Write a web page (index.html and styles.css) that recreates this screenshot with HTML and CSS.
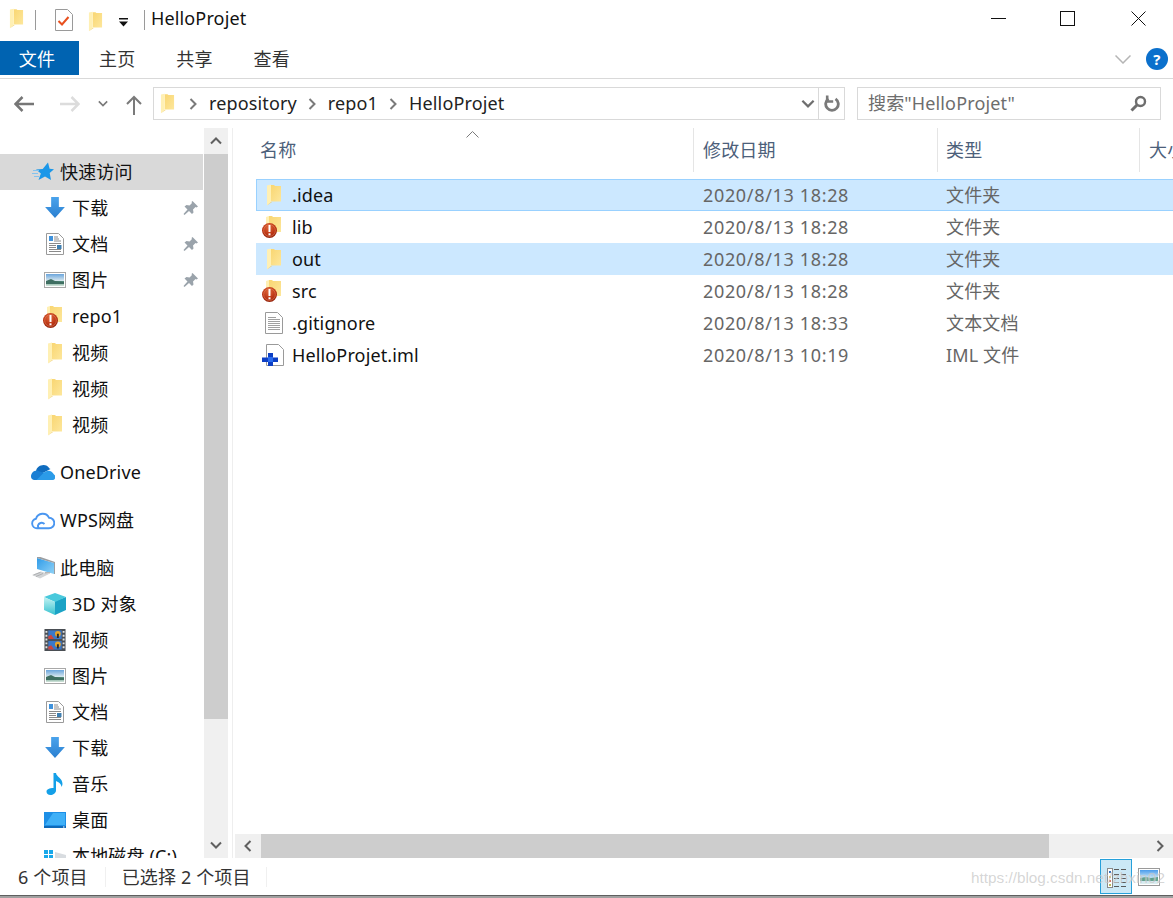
FILE: index.html
```html
<!DOCTYPE html>
<html lang="zh">
<head>
<meta charset="utf-8">
<title>HelloProjet</title>
<link rel="stylesheet" href="styles.css">
</head>
<body>
<svg class="sprite" aria-hidden="true">
  <defs>
    <linearGradient id="gFolder" x1="0" y1="0" x2="1" y2="1"><stop offset="0" stop-color="#f9d672"/><stop offset="1" stop-color="#fde79c"/></linearGradient>
    <linearGradient id="gBlue" x1="0" y1="0" x2="0" y2="1"><stop offset="0" stop-color="#4aa3ec"/><stop offset="1" stop-color="#2a7fd0"/></linearGradient>
    <radialGradient id="gRed" cx=".45" cy=".3" r=".75"><stop offset="0" stop-color="#e0683a"/><stop offset=".6" stop-color="#bb3414"/><stop offset="1" stop-color="#8c220e"/></radialGradient>
    <linearGradient id="gPic" x1="0" y1="0" x2="0" y2="1"><stop offset="0" stop-color="#6aa5dc"/><stop offset=".55" stop-color="#d6e6ee"/><stop offset=".6" stop-color="#4f8a78"/><stop offset="1" stop-color="#d4e6dc"/></linearGradient>
    <linearGradient id="gCube" x1="0" y1="0" x2="0" y2="1"><stop offset="0" stop-color="#c4f3f3"/><stop offset="1" stop-color="#36c2d0"/></linearGradient>
    <linearGradient id="gMon" x1="0" y1="0" x2="1" y2="1"><stop offset="0" stop-color="#2f9be8"/><stop offset="1" stop-color="#8fd2f7"/></linearGradient>
    <linearGradient id="gSky" x1="0" y1="0" x2="0" y2="1"><stop offset="0" stop-color="#4a9cec"/><stop offset=".5" stop-color="#b8dcf4"/><stop offset="1" stop-color="#e0f0f0"/></linearGradient>
    <symbol id="i-folder" viewBox="0 0 16 22">
      <path d="M5 1h3l1 1h6v15.500H5z" fill="url(#gFolder)"/>
      <path d="M1 1.500L5 .500V18l-4 3.500z" fill="#fff0b4"/>
      <path d="M1 21.500L5 18h1z" fill="#eecb68"/>
    </symbol>
    <symbol id="i-badfolder" viewBox="0 0 22 22">
      <path d="M7 0h3l1 1h8v15H7z" fill="url(#gFolder)"/>
      <path d="M4 1l3-1v12H4z" fill="#fff0b4"/>
      <circle cx="7.500" cy="14.500" r="7.500" fill="url(#gRed)"/>
      <circle cx="7.500" cy="14.500" r="5.800" fill="none" stroke="#f09a70" stroke-opacity=".45"/>
      <rect x="6.500" y="9" width="2" height="7" fill="#fff"/><rect x="6.500" y="17.300" width="2" height="2" fill="#fff"/>
    </symbol>
    <symbol id="i-down" viewBox="0 0 20 20">
      <path d="M6.500 0h7v9H19l-9 10-9-10h5.500z" fill="url(#gBlue)"/>
    </symbol>
    <symbol id="i-doc" viewBox="0 0 18 22">
      <path d="M.5.500h12l5 5v16H.500z" fill="#fff" stroke="#9a9a9a"/>
      <path d="M3 3h4v5H3z" fill="#3f92dc"/>
      <path d="M8 4h4M8 6h5M8 8h7M3 10.500h12M3 12.500h7M3 14.500h7M3 16.500h12M3 18.500h12" stroke="#8a8a8a"/>
      <path d="M11 12h4.500v4H11z" fill="#3f7fb0"/>
    </symbol>
    <symbol id="i-pic" viewBox="0 0 22 16">
      <rect x=".5" y=".5" width="21" height="15" fill="#fff" stroke="#a8a8a8"/>
      <rect x="2" y="2" width="18" height="12" fill="url(#gPic)"/>
      <path d="M2 9l5-2 4 2 9 1v2L2 12z" fill="#3f6f62"/>
    </symbol>
    <symbol id="i-pin" viewBox="0 0 16 16">
      <path d="M9.500 1l5.500 5.500-1.500 1-1-.5-2.500 2.500.5 3-1.500 1.500-3-3-4.500 4-1-1 4-4.500-3-3L3.500 5l3 .500L9 3l-.5-1z" fill="#9aa3ab"/>
    </symbol>
    <symbol id="i-star" viewBox="0 0 22 20">
      <path d="M16 .5l1.600 6.300 4.400.4-4.300 3.700 1.300 7.100-6-3.600-6.500 3.600 2.400-6.600-4.900-3.900 6.700-.4z" fill="#1b97e8"/>
      <path d="M1 8.500h6M0 11.500h6M2 14.500h5" stroke="#85c3ee"/>
    </symbol>
    <symbol id="i-onedrive" viewBox="0 0 24 17">
      <path d="M5 7A7.500 7.500 0 0 1 18.500 5a5 5 0 0 1 1 .4L9 11z" fill="#0f6cbf"/>
      <path d="M8 16.500h13a3 3 0 0 0 2-5.500C21 7 17 6 14 8.500L4.500 11A3 3 0 0 0 5 16.500z" fill="#2b9be8"/>
      <path d="M0 13c0-3.500 3-6.500 6.500-6l6 2.500-7 7H3A3.500 3.500 0 0 1 0 13z" fill="#1a7fd4"/>
    </symbol>
    <symbol id="i-cloud" viewBox="0 0 24 19">
      <path d="M6 17.800a4.800 4.800 0 0 1-1-9.500A7 7 0 0 1 18 7.200a5.300 5.300 0 0 1 0 10.600H6zM8 17.800c-2-2-1-4.500 1.500-5.300 1.500-.5 3 0 4 1" fill="none" stroke="#4a96f0" stroke-width="1.900"/>
    </symbol>
    <symbol id="i-pc" viewBox="0 0 24 22">
      <path d="M6 1l17 5v11L6 12z" fill="url(#gMon)"/>
      <path d="M6 0l2-.5 16 5.500v12l-1 0V6L6 1z" fill="#9a9ea2"/>
      <path d="M1 18l9-3.500 8 2.500-9 4.500z" fill="#d2d4d6"/><path d="M2.500 18l7-2.700M5 19.500l7-3" stroke="#aeb0b2"/><path d="M14 15h5v1.500h-5z" fill="#b5b5b5"/>
    </symbol>
    <symbol id="i-3d" viewBox="0 0 22 22">
      <path d="M11 8l11-4v13l-11 5z" fill="#1ba3c6"/>
      <path d="M11 0L0 4l11 5 11-5z" fill="#49c9dc"/>
      <path d="M0 4l11 5v13L0 17z" fill="url(#gCube)"/>
    </symbol>
    <symbol id="i-film" viewBox="0 0 22 23">
      <rect width="22" height="23" fill="#4a4e54"/>
      <rect x="4" y="1.500" width="14" height="9" fill="#3b78c8"/>
      <rect x="4" y="12.500" width="14" height="9" fill="#3b78c8"/>
      <circle cx="14" cy="5" r="3" fill="#e8a52a"/><circle cx="14" cy="16" r="3" fill="#e8a52a"/>
      <path d="M13 5h2v4.500h-2zM13 16h2v4.500h-2z" fill="#2a2a2a"/>
      <path d="M4 10.500l0-3 3-1.500 3 4.500zM4 21.500l0-3 3-1.500 3 4.500z" fill="#d0433a"/>
      <path d="M1 2h2v2H1zM1 6h2v2H1zM1 10h2v2H1zM1 14h2v2H1zM1 18h2v2H1zM19 2h2v2h-2zM19 6h2v2h-2zM19 10h2v2h-2zM19 14h2v2h-2zM19 18h2v2h-2z" fill="#e2e2e2"/>
    </symbol>
    <symbol id="i-music" viewBox="0 0 17 22">
      <path d="M7 0h2.500c.5 4 6.500 5 6.500 11 0 1-.5 2-1 3 0-3-3-5-5.500-6V17.500c0 2.500-3 4.500-5.500 4.500S0 20.500 0 18.500 3 15 7 15z" fill="#14a0e8"/>
    </symbol>
    <symbol id="i-desk" viewBox="0 0 22 16">
      <rect width="22" height="16" fill="#1d8fe6"/>
      <path d="M9 1h12v12H1z" fill="#3fb0f7"/>
      <rect y="14" width="22" height="2" fill="#0e69b8"/>
      <path d="M19 14.500h1.500v1H19z" fill="#fff"/>
    </symbol>
    <symbol id="i-win" viewBox="0 0 22 18">
      <path d="M0 3h4v4H0zM5 3h4v4H5zM0 8h4v4H0zM5 8h4v4H5z" fill="#18a8ea"/>
      <path d="M11 5l11 3v10H11z" fill="#d8dce0"/>
    </symbol>
    <symbol id="i-text" viewBox="0 0 18 22">
      <path d="M.5.500h12l5 5v16H.500z" fill="#fff" stroke="#9a9a9a"/>
      <path d="M3 5.500h8M3 7.500h12M3 9.500h12M3 11.500h12M3 13.500h12M3 15.500h12M3 17.500h12" stroke="#a0a0a0"/>
    </symbol>
    <symbol id="i-iml" viewBox="0 0 22 22">
      <path d="M4.500.500h12l5 5v16h-17z" fill="#fff" stroke="#9a9a9a"/>
      <path d="M6 9h5v4.500h5V18h-5v4H6v-4H0v-4.500h6z" fill="#0d3fc4"/>
      <rect x="6" y="13" width="5" height="5" fill="#2a6cf0"/>
    </symbol>
    <symbol id="i-chev" viewBox="0 0 12 8">
      <path d="M1 1.500l5 5 5-5" fill="none" stroke="currentColor" stroke-width="2"/>
    </symbol>
    <symbol id="i-crumb" viewBox="0 0 8 12">
      <path d="M1.500 1l5 5-5 5" fill="none" stroke="currentColor" stroke-width="2"/>
    </symbol>
    <symbol id="i-arrow" viewBox="0 0 20 16">
      <path d="M1 8h19M8.500 1L1.500 8l7 7" fill="none" stroke="currentColor" stroke-width="2.500"/>
    </symbol>
    <symbol id="i-up" viewBox="0 0 16 20">
      <path d="M8 20V2M1 9l7-7 7 7" fill="none" stroke="#7a7a7a" stroke-width="2"/>
    </symbol>
  </defs>
</svg>

<header class="titlebar">
  <svg class="ic folder qat-first"><use href="#i-folder"/></svg>
  <span class="vsep sep-a"></span>
  <svg class="qat-doc" viewBox="0 0 18 22">
    <path d="M.5.500h12l5 5v16H.500z" fill="#fff" stroke="#9a9a9a"/>
    <path d="M3.500 12l3.500 3.500L13.500 8" fill="none" stroke="#e8501e" stroke-width="2"/>
  </svg>
  <svg class="ic folder qat-folder"><use href="#i-folder"/></svg>
  <svg class="qat-drop" viewBox="0 0 9 9"><path d="M0 0h9v1.500H0zM0 3.500h9L4.500 8.500z" fill="#111"/></svg>
  <span class="vsep sep-b"></span>
  <span class="title">HelloProjet</span>
  <div class="winctl">
    <svg class="wbtn" viewBox="0 0 15 15"><path d="M0 7.500h15" stroke="#111"/></svg>
    <svg class="wbtn" viewBox="0 0 15 15"><rect x=".5" y=".5" width="14" height="14" fill="none" stroke="#111"/></svg>
    <svg class="wbtn wbtn-close" viewBox="0 0 15 15"><path d="M.5.500l14 14M14.500.500l-14 14" stroke="#111"/></svg>
  </div>
</header>

<nav class="ribbon">
  <span class="tab tab-file">文件</span>
  <span class="tab tab-home">主页</span>
  <span class="tab tab-share">共享</span>
  <span class="tab tab-view">查看</span>
  <div class="ribbon-end">
    <svg class="rib-chev" viewBox="0 0 16 9"><path d="M.5.500L8 8 15.500.500" fill="none" stroke="#b5b5b5" stroke-width="1.500"/></svg>
    <span class="help">?</span>
  </div>
</nav>

<div class="addrbar">
  <svg class="nav-arrow back"><use href="#i-arrow"/></svg>
  <svg class="nav-arrow fwd"><use href="#i-arrow"/></svg>
  <svg class="nav-recent"><use href="#i-chev"/></svg>
  <svg class="nav-up"><use href="#i-up"/></svg>
  <div class="addr">
    <svg class="addr-folder"><use href="#i-folder"/></svg>
    <svg class="crumb crumb-1"><use href="#i-crumb"/></svg>
    <span class="seg">repository</span>
    <svg class="crumb"><use href="#i-crumb"/></svg>
    <span class="seg">repo1</span>
    <svg class="crumb"><use href="#i-crumb"/></svg>
    <span class="seg">HelloProjet</span>
    <svg class="addr-drop"><use href="#i-chev"/></svg>
    <span class="addr-div"></span>
    <svg class="refresh" viewBox="0 0 16 17"><path d="M11.500 3.800a6.300 6.300 0 1 1-7 0" fill="none" stroke="#7a7a7a" stroke-width="2.800"/><path d="M3.200 .5v6h6" fill="none" stroke="#7a7a7a" stroke-width="2.600"/></svg>
  </div>
  <div class="search">
    <span class="seg search-text">搜索"HelloProjet"</span>
    <svg class="search-ic" viewBox="0 0 17 17"><circle cx="10.500" cy="6.500" r="4.500" fill="none" stroke="#6e6e6e" stroke-width="2.400"/><path d="M7 10l-5.500 5.500" stroke="#6e6e6e" stroke-width="3"/></svg>
  </div>
</div>

<main class="content">
  <aside class="navpane">
    <div class="navlist">
      <div class="navrow lvl0 active"><svg class="ni"><use href="#i-star"/></svg><span>快速访问</span></div>
      <div class="navrow"><svg class="ni"><use href="#i-down"/></svg><span>下载</span><svg class="pin"><use href="#i-pin"/></svg></div>
      <div class="navrow"><svg class="ni"><use href="#i-doc"/></svg><span>文档</span><svg class="pin"><use href="#i-pin"/></svg></div>
      <div class="navrow"><svg class="ni"><use href="#i-pic"/></svg><span>图片</span><svg class="pin"><use href="#i-pin"/></svg></div>
      <div class="navrow"><svg class="ni bad"><use href="#i-badfolder"/></svg><span>repo1</span></div>
      <div class="navrow nudge"><svg class="ni"><use href="#i-folder"/></svg><span>视频</span></div>
      <div class="navrow"><svg class="ni"><use href="#i-folder"/></svg><span>视频</span></div>
      <div class="navrow"><svg class="ni"><use href="#i-folder"/></svg><span>视频</span></div>
      <div class="navrow lvl0 group tight"><svg class="ni w24"><use href="#i-onedrive"/></svg><span>OneDrive</span></div>
      <div class="navrow lvl0 group"><svg class="ni w24"><use href="#i-cloud"/></svg><span>WPS网盘</span></div>
      <div class="navrow lvl0 group"><svg class="ni w24"><use href="#i-pc"/></svg><span>此电脑</span></div>
      <div class="navrow"><svg class="ni"><use href="#i-3d"/></svg><span>3D 对象</span></div>
      <div class="navrow"><svg class="ni"><use href="#i-film"/></svg><span>视频</span></div>
      <div class="navrow"><svg class="ni"><use href="#i-pic"/></svg><span>图片</span></div>
      <div class="navrow"><svg class="ni"><use href="#i-doc"/></svg><span>文档</span></div>
      <div class="navrow"><svg class="ni"><use href="#i-down"/></svg><span>下载</span></div>
      <div class="navrow"><svg class="ni"><use href="#i-music"/></svg><span>音乐</span></div>
      <div class="navrow"><svg class="ni"><use href="#i-desk"/></svg><span>桌面</span></div>
      <div class="navrow"><svg class="ni"><use href="#i-win"/></svg><span>本地磁盘 (C:)</span></div>
    </div>
    <div class="vscroll">
      <span class="sbtn"><svg class="sb-ic up"><use href="#i-chev"/></svg></span>
      <span class="vthumb"></span>
      <span class="vtrack"></span>
      <span class="sbtn"><svg class="sb-ic"><use href="#i-chev"/></svg></span>
    </div>
  </aside>

  <section class="listpane">
    <div class="colhead">
      <span class="col c-name">名称<svg class="sort" viewBox="0 0 13 7"><path d="M.5 6.500l6-6 6 6" fill="none" stroke="#7a7a7a"/></svg></span>
      <span class="col c-date">修改日期</span>
      <span class="col c-type">类型</span>
      <span class="col c-size">大小</span>
    </div>
    <div class="rows">
      <div class="frow sel focus"><svg class="fi"><use href="#i-folder"/></svg><span class="f-name">.idea</span><span class="f-date">2020/8/13 18:28</span><span class="f-type">文件夹</span></div>
      <div class="frow"><svg class="fi wide"><use href="#i-badfolder"/></svg><span class="f-name">lib</span><span class="f-date">2020/8/13 18:28</span><span class="f-type">文件夹</span></div>
      <div class="frow sel"><svg class="fi"><use href="#i-folder"/></svg><span class="f-name">out</span><span class="f-date">2020/8/13 18:28</span><span class="f-type">文件夹</span></div>
      <div class="frow"><svg class="fi wide"><use href="#i-badfolder"/></svg><span class="f-name">src</span><span class="f-date">2020/8/13 18:28</span><span class="f-type">文件夹</span></div>
      <div class="frow"><svg class="fi"><use href="#i-text"/></svg><span class="f-name">.gitignore</span><span class="f-date">2020/8/13 18:33</span><span class="f-type">文本文档</span></div>
      <div class="frow"><svg class="fi iml"><use href="#i-iml"/></svg><span class="f-name">HelloProjet.iml</span><span class="f-date">2020/8/13 10:19</span><span class="f-type">IML 文件</span></div>
    </div>
    <div class="hscroll">
      <span class="hbtn"><svg class="hb-ic left"><use href="#i-crumb"/></svg></span>
      <span class="hthumb"></span>
      <span class="htrack"></span>
      <span class="hbtn"><svg class="hb-ic"><use href="#i-crumb"/></svg></span>
    </div>
  </section>
</main>

<footer class="status">
  <span class="st-count">6 个项目</span>
  <span class="st-div"></span>
  <span class="st-sel">已选择 2 个项目</span>
  <span class="st-div"></span>
  <div class="views">
    <span class="view on">
      <svg class="view-ic" viewBox="0 0 22 22">
        <rect x="2.500" y="2.500" width="5" height="19" fill="#fff" stroke="#8a8a8a"/>
        <path d="M4 5h2v2H4z" fill="#2a6cc0"/><path d="M4 10h2v2H4z" fill="#d8b84a"/><path d="M4 14h2v2H4z" fill="#d06a5a"/><path d="M4 18h2v2H4z" fill="#b8b85a"/>
        <path d="M9 3.500h5M16 3.500h5M9 8.500h5M16 8.500h5M9 12.500h5M16 12.500h5M9 16.500h5M16 16.500h5M9 20.500h5M16 20.500h5" stroke="#5a5a5a"/>
      </svg>
    </span>
    <span class="view">
      <svg class="view-pic" viewBox="0 0 22 18">
        <rect x=".5" y=".5" width="21" height="17" fill="#fff" stroke="#9a9a9a"/>
        <rect x="2" y="2" width="18" height="14" fill="url(#gSky)"/>
        <path d="M2 10l6-1 5 1 7-1v4H2z" fill="#5f9f8c"/>
      </svg>
    </span>
  </div>
  <span class="watermark">https://blog.csdn.net/zhxin02</span>
</footer>
<div class="bottom-edge"></div>
</body>
</html>
```
FILE: styles.css
```css
* { box-sizing: border-box; }
html, body { margin: 0; padding: 0; }
body {
  width: 1173px;
  height: 898px;
  overflow: hidden;
  display: flex;
  flex-direction: column;
  background: #fff;
  color: #111;
  font-family: "Noto Sans", "Noto Sans CJK SC", sans-serif;
  font-size: 18px;
  line-height: 24px;
  letter-spacing: .14px;
}
.sprite { display: block; width: 0; height: 0; overflow: hidden; flex: none; }
svg { display: block; flex: none; }

/* title bar */
.titlebar { height: 41px; flex: none; display: flex; align-items: center; padding: 0 0 2px 9px; }
.ic.folder { width: 15px; height: 21px; }
.qat-first { margin-bottom: 3px; }
.vsep { width: 1px; height: 20px; background: #9a9a9a; }
.sep-a { margin-left: 11px; }
.qat-doc { width: 18px; height: 22px; margin-left: 19px; margin-top: 1px; }
.qat-folder { margin-left: 15px; margin-top: 3px; }
.qat-drop { width: 9px; height: 9px; margin-left: 16px; margin-top: 5px; }
.sep-b { margin-left: 16px; }
.title { margin-left: 6px; margin-top: -4px; color: #111; }
.winctl { margin-left: auto; display: flex; margin-right: 27px; gap: 54px; padding-bottom: 2px; }
.wbtn { width: 15px; height: 15px; }
.wbtn-close { margin-left: 2px; }

/* ribbon */
.ribbon { height: 38px; flex: none; display: flex; align-items: flex-start; border-bottom: 1px solid #d9d9d9; }
.tab { height: 34px; line-height: 36px; color: #333; }
.tab-file { width: 79px; background: #0063b1; color: #fff; text-align: center; padding-right: 5px; }
.tab-home { margin-left: 20px; }
.tab-share { margin-left: 41px; }
.tab-view { margin-left: 41px; }
.ribbon-end { margin-left: auto; display: flex; align-items: center; height: 36px; padding-right: 5px; }
.rib-chev { width: 16px; height: 9px; margin-right: 15px; }
.help { width: 22px; height: 22px; border-radius: 50%; background: #0b70cc; color: #fff; font-weight: 700; font-size: 15px; line-height: 22px; text-align: center; }

/* address row */
.addrbar { height: 49px; flex: none; display: flex; align-items: flex-start; padding-top: 8px; color: #222; }
.nav-arrow { width: 20px; height: 16px; margin-top: 9px; }
.back { margin-left: 14px; color: #767676; }
.fwd { margin-left: 26px; color: #dcdcdc; transform: scaleX(-1); }
.nav-recent { width: 10px; height: 7px; margin: 13px 0 0 18px; color: #7a7a7a; }
.nav-up { width: 16px; height: 20px; margin: 8px 0 0 18px; }
.addr { width: 692px; height: 33px; margin-left: 11px; border: 1px solid #d9d9d9; display: flex; align-items: center; padding-left: 6px; }
.seg { margin-top: -2px; }
.addr-folder { width: 15px; height: 21px; margin-right: 14px; }
.crumb { width: 8px; height: 12px; margin: 0 12px 0 11px; color: #7a7a7a; }
.crumb-1 { margin-left: 0; }
.addr-drop { width: 14px; height: 9px; color: #6e6e6e; margin-left: auto; }
.addr-div { width: 1px; height: 31px; background: #d9d9d9; margin-left: 3px; }
.refresh { width: 16px; height: 17px; margin: 0 4px 0 5px; }
.search { width: 304px; height: 33px; margin-left: 12px; border: 1px solid #d9d9d9; display: flex; align-items: center; padding: 0 13px 0 10px; color: #6d6d6d; }
.search-ic { width: 17px; height: 17px; margin-left: auto; }

/* content */
.content { flex: 1 1 auto; min-height: 0; display: flex; height: 730px; }
.navpane { width: 233px; flex: none; display: flex; border-right: 1px solid #eeeeee; }
.navlist { width: 204px; flex: none; overflow: hidden; padding-top: 26px; }
.navrow { height: 36px; display: flex; align-items: center; padding-left: 44px; white-space: nowrap; color: #111; width: 203px; }
.navrow.lvl0 { padding-left: 32px; }
.navrow.active { background: #d9d9d9; }
.navrow.group { margin-top: 12px; }
.navrow.group.tight { margin-top: 11px; }
.navrow.nudge { margin-top: 1px; }
.ni { width: 22px; height: 22px; margin-right: 6px; }
.ni.bad { margin-left: -1px; margin-right: 7px; margin-top: 2px; }
.ni.w24 { width: 24px; margin-left: -1px; margin-right: 5px; }
.navrow span { flex: none; }
.pin { width: 16px; height: 16px; margin-left: auto; margin-right: 4px; }
.vscroll { width: 24px; flex: none; display: flex; flex-direction: column; background: #f0f0f0; }
.sbtn { height: 26px; flex: none; display: flex; align-items: center; justify-content: center; color: #606060; }
.sb-ic { width: 12px; height: 8px; }
.sb-ic.up { transform: scaleY(-1); }
.vthumb { height: 565px; flex: none; background: #cdcdcd; }
.vtrack { flex: 1 1 auto; }

.listpane { flex: 1 1 auto; min-width: 0; display: flex; flex-direction: column; padding-left: 1px; }
.colhead { height: 51px; flex: none; display: flex; color: #4c607a; }
.col { height: 44px; line-height: 45px; padding-left: 9px; border-right: 1px solid #e5e5e5; position: relative; flex: none; }
.c-name { width: 460px; padding-left: 26px; }
.c-date { width: 244px; }
.c-type { width: 202px; padding-left: 8px; }
.c-size { flex: 1 1 auto; border-right: 0; overflow: hidden; white-space: nowrap; width: 33px; }
.sort { position: absolute; left: 232px; top: 3px; width: 13px; height: 7px; }
.rows { flex: 1 1 auto; min-height: 0; padding-left: 22px; }
.frow { height: 32px; display: flex; align-items: center; white-space: nowrap; }
.frow.sel { background: #cce8ff; }
.frow.focus { border: 1px solid #99d1ff; border-right: 0; }
.fi { width: 22px; height: 22px; margin-left: 7px; margin-right: 7px; }
.focus .fi { margin-left: 6px; }
.fi.wide { margin-left: 6px; margin-right: 8px; }
.fi.iml { margin-left: 6px; margin-right: 8px; }
.f-name { width: 411px; color: #111; flex: none; }
.f-date { width: 243px; color: #666; flex: none; letter-spacing: .66px; }
.f-type { color: #666; }
.hscroll { height: 24px; flex: none; display: flex; background: #f0f0f0; margin-left: 1px; color: #606060; }
.hbtn { width: 26px; flex: none; display: flex; align-items: center; justify-content: center; }
.hb-ic { width: 8px; height: 12px; }
.hb-ic.left { transform: scaleX(-1); }
.hthumb { width: 788px; flex: none; background: #cdcdcd; }
.htrack { flex: 1 1 auto; }

/* status */
.status { height: 37px; flex: none; display: flex; align-items: center; padding-left: 18px; color: #333; position: relative; }
.st-div { width: 1px; height: 20px; background: #f0f0f0; margin: 0 17px; }
.st-sel { margin-left: -1px; margin-right: -2px; }
.views { margin-left: auto; display: flex; align-items: center; }
.view { width: 32px; height: 35px; display: flex; align-items: center; justify-content: center; border: 1px solid transparent; margin-right: 8px; }
.view.on { background: #cbe8f6; border-color: #26a0da; margin-right: 1px; }
.view-ic { width: 22px; height: 22px; }
.view-pic { width: 22px; height: 18px; }
.watermark { position: absolute; left: 971px; top: 8px; font-family: "Liberation Sans", sans-serif; font-size: 15.3px; letter-spacing: 0; color: rgba(150,150,150,.4); text-shadow: 0 0 1px rgba(255,255,255,.7); white-space: nowrap; }
.bottom-edge { height: 3px; flex: none; background: #a0a0a0; border-top: 1px solid #5f5f5f; }
```
